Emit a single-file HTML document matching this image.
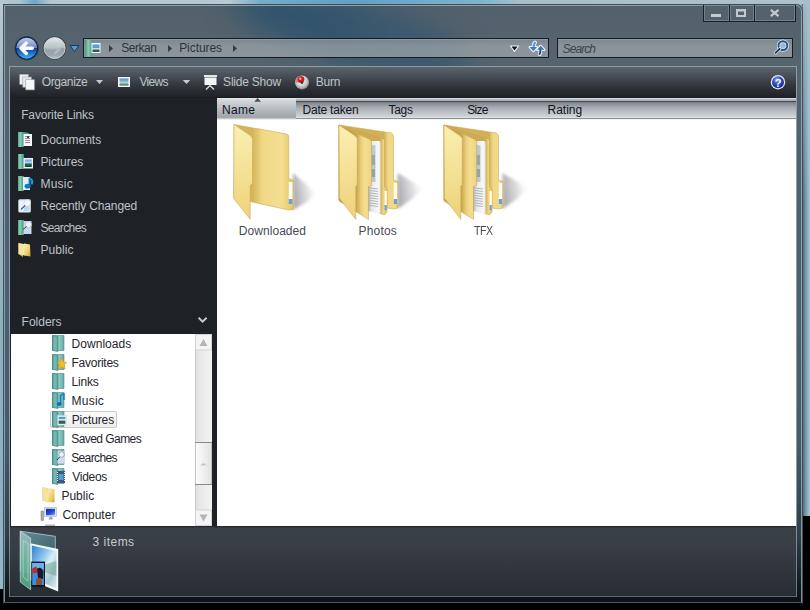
<!DOCTYPE html>
<html><head><meta charset="utf-8">
<style>
*{margin:0;padding:0;box-sizing:border-box}
html,body{width:810px;height:610px;overflow:hidden;background:#000;font-family:"Liberation Sans",sans-serif;font-size:12px}
.a{position:absolute}
#desk{left:0;top:0;width:810px;height:610px;background:#000}
#deskl{left:0;top:0;width:3px;height:589px;background:linear-gradient(180deg,#b9cad3 0,#a9bcc6 80px,#a0b6c0 160px,#90b0c0 320px,#8cb0c2 480px,#94b8c8 589px)}
#deskt{left:0;top:0;width:810px;height:4px;background:linear-gradient(90deg,#b6c8d1 0,#a9c4d3 20px,#6ea5c8 35px,#b3c7d0 50px,#b7c9d2 230px,#78acc9 260px,#62a0c4 350px,#7fb3cd 480px,#a8bec8 520px,#adc2cc 810px)}
#deskro{left:803px;top:0;width:7px;height:200px;background:linear-gradient(180deg,rgba(168,190,202,.9) 0,rgba(168,190,202,.6) 60px,rgba(168,190,202,0) 200px)}

#deskr{left:780px;top:0;width:30px;height:516px;background:linear-gradient(90deg,#9ab4c0 0,#9ab4c0 21px,#4f6d7e 23px,#7a9cb0 26px,#a8ccdc 30px)}
#win{left:3px;top:4px;width:800px;height:600px;background:linear-gradient(180deg,#53616c 0,#56646e 60px,#4f6270 140px,#4a6171 300px,#455b6b 440px,#2e3e4a 530px,#0d1318 590px,#0b1015 600px);border:1px solid #3c505c;border-bottom-color:#000;border-radius:0 7px 0 0}
#win::before{content:"";position:absolute;left:0;top:0;right:0;bottom:0;border:1px solid rgba(165,182,192,.75);border-radius:0 6px 0 0}
#glass{left:5px;top:6px;width:796px;height:60px;overflow:hidden}
.tb{top:4px;height:18px;border:1px solid #1a2126;border-top:0;background:#53626c}
.tb::before{content:"";position:absolute;left:0;top:0;right:0;bottom:0;border:1px solid rgba(150,165,175,.45);border-top:1px solid rgba(150,165,175,.6)}
#inner{left:9px;top:66px;width:788px;height:531px;border:1px solid #8f9ca5;border-bottom-color:#5f6870;background:#1e2126}
#innerl{left:9px;top:500px;width:1px;height:96px;background:linear-gradient(180deg,rgba(95,104,112,0),#6a747c)}
#innerr{left:796px;top:500px;width:1px;height:96px;background:linear-gradient(180deg,rgba(95,104,112,0),#6a747c)}
#outb{left:4px;top:602px;width:798px;height:1px;background:#4d565c}
#addr{left:83px;top:38px;width:466px;height:20px;border:1px solid #161d22;background:linear-gradient(180deg,rgba(140,150,158,.7),rgba(160,168,173,.7) 40%,rgba(162,170,175,.7))}
#addr::before{content:"";position:absolute;left:0;top:0;right:0;bottom:0;border-top:1px solid rgba(160,172,180,.5)}
#search{left:557px;top:38px;width:236px;height:20px;border:1px solid #161d22;background:linear-gradient(180deg,rgba(140,150,158,.7),rgba(160,168,173,.7) 40%,rgba(162,170,175,.7))}
#search::before{content:"";position:absolute;left:0;top:0;right:0;bottom:0;border-top:1px solid rgba(160,172,180,.5)}
#toolbar{left:10px;top:67px;width:786px;height:31px;background:linear-gradient(180deg,#5b636b 0,#4a5159 8px,#353a41 17px,#262a2f 25px,#1f2226 30px,#16191c 31px)}
#lp{left:10px;top:98px;width:207px;height:428px;background:#1e2126}
#content{left:217px;top:98px;width:579px;height:428px;background:#fff}
#hdr{left:217px;top:98px;width:579px;height:22px;background:linear-gradient(180deg,#dcdfe2 0,#dcdfe2 1px,#aeb3b8 1px,#aeb3b8 3px,#40464e 3px,#40464e 4px,#7a8189 4px,#a9b0b6 10px,#d1d5d9 19px,#eceef0 20px,#eceef0 20px,#8b8f94 20px,#8b8f94 21px,#f4f4f4 21px)}
#hdrs{left:217px;top:98px;width:79px;height:22px;background:linear-gradient(180deg,#e1e3e5 0,#e1e3e5 1px,#d5d8db 2px,#c4c8cc 7px,#b3b8bd 12px,#a1a6ac 19px,#a6abb0 20px,#dfe1e3 21px,#f4f4f4 22px)}
#tree{left:11px;top:334px;width:201px;height:192px;background:#fff}
#sb{left:195px;top:334px;width:17px;height:192px;background:linear-gradient(90deg,#c9c9c9 0,#c9c9c9 1px,#e2e2e2 1px,#ececec 50%,#f2f2f2 100%)}
#details{left:10px;top:526px;width:786px;height:70px;background:linear-gradient(180deg,#1e2227 0,#3a4048 2px,#383e46 20px,#30353c 45px,#282d33 70px)}
.lt{color:#bfc3c8;font-size:12px;line-height:14px;white-space:nowrap}
.dt{color:#24242e;font-size:12px;line-height:14px;white-space:nowrap}
</style></head><body>
<div class="a" id="desk"></div>
<div class="a" id="deskl"></div>
<div class="a" id="deskr"></div>
<div class="a" id="deskt"></div>
<div class="a" id="deskro"></div>
<div class="a" id="win"></div>
<svg class="a" id="glass" width="796" height="60"><defs><filter id="bl" x="-50%" y="-50%" width="200%" height="200%"><feGaussianBlur stdDeviation="14"/></filter></defs>
<ellipse cx="345" cy="26" rx="125" ry="34" transform="rotate(16 345 26)" fill="#22506e" opacity=".5" filter="url(#bl)"/>
<ellipse cx="300" cy="14" rx="60" ry="16" transform="rotate(20 300 14)" fill="#1d4a68" opacity=".35" filter="url(#bl)"/>
</svg>
<div class="a" id="addr"></div>
<div class="a" id="search"></div>

<div class="a tb" style="left:703px;width:27px;top:5px;height:17px"></div>
<div class="a tb" style="left:729px;width:26px;top:5px;height:17px"></div>
<div class="a tb" style="left:754px;width:42px;top:5px;height:17px"></div>
<svg class="a" style="left:700px;top:4px" width="100" height="20">
 <rect x="11" y="10" width="10" height="3" fill="#c3cacf"/>
 <rect x="37" y="6" width="8" height="6" fill="none" stroke="#c3cacf" stroke-width="2"/>
 <rect x="36" y="5" width="10" height="2.5" fill="#c3cacf"/>
 <path d="M70.8 5.8 L78.5 12.2 M78.5 5.8 L70.8 12.2" stroke="#c3cacf" stroke-width="2.2"/>
</svg>
<svg class="a" style="left:12px;top:34px" width="70" height="30">
 <defs>
  <linearGradient id="bk1" x1="0" y1="0" x2="0" y2="1"><stop offset="0" stop-color="#c3cde6"/><stop offset=".5" stop-color="#6b86c7"/><stop offset=".5" stop-color="#0b3aa6"/><stop offset="1" stop-color="#3cb5f5"/></linearGradient>
  <linearGradient id="fw1" x1="0" y1="0" x2="0" y2="1"><stop offset="0" stop-color="#e2e7ea"/><stop offset=".45" stop-color="#bcc4c8"/><stop offset=".52" stop-color="#94a0a8"/><stop offset=".8" stop-color="#9aa6ad"/><stop offset="1" stop-color="#b8c2c6"/></linearGradient>
 </defs>
 <circle cx="14.7" cy="14.2" r="12.2" fill="#1c2c55" opacity=".55"/><circle cx="14.7" cy="14.2" r="11.4" fill="#0c1a40" opacity=".85"/>
 <circle cx="14.7" cy="14.2" r="10.5" fill="url(#bk1)"/>
 <path d="M9.5 14.3 H20.2 M14.2 9.2 L9 14.3 L14.2 19.4" fill="none" stroke="#f8faff" stroke-width="3.6" stroke-linecap="round" stroke-linejoin="round"/>
 <circle cx="42.6" cy="14.1" r="11.7" fill="#2a3238" opacity=".8"/>
 <circle cx="42.6" cy="14.1" r="10.6" fill="url(#fw1)" stroke="#d8dee2" stroke-width=".8"/>
 <path d="M34.5 14.2 H47.5 M43.5 9.5 L48.2 14.2 L43.5 18.9" fill="none" stroke="#c4ccd0" stroke-width="2.6" stroke-linecap="round" stroke-linejoin="round" opacity=".55"/>
 <path d="M58 11.5 L67 11.5 L62.5 17.5 Z" fill="#4a9ad8" stroke="#1a3a66" stroke-width="1"/>
</svg>
<svg class="a" style="left:84px;top:39px" width="40" height="19">
 <defs><linearGradient id="ab" x1="0" y1="0" x2="1" y2="0"><stop offset="0" stop-color="#3f9a78"/><stop offset=".4" stop-color="#8ad4b4"/><stop offset="1" stop-color="#4aa084"/></linearGradient></defs>
 <rect x="1.5" y="1" width="6.5" height="16.5" fill="url(#ab)" opacity=".9"/>
 <rect x="7.5" y="4" width="9" height="10" fill="#f4f8fa"/>
 <rect x="8.5" y="5.5" width="7" height="4" fill="#5a9ad0"/>
 <rect x="8.5" y="9.5" width="7" height="1" fill="#d8eef4"/>
 <rect x="8.5" y="10.5" width="7" height="2.5" fill="#2f5a48"/>
 <path d="M25 6 L29 9.5 L25 13 Z" fill="#343c42"/>
</svg>
<svg class="a" style="left:165px;top:39px" width="10" height="19"><path d="M3 6 L7 9.5 L3 13 Z" fill="#343c42"/></svg>
<svg class="a" style="left:230px;top:39px" width="10" height="19"><path d="M3 6 L7 9.5 L3 13 Z" fill="#343c42"/></svg>
<svg class="a" style="left:505px;top:39px" width="45" height="19">
 <path d="M5.5 7 L13.5 7 L9.5 12.5 Z" fill="#0c1230" stroke="#f2f4f8" stroke-width="1.2" stroke-linejoin="round"/>
 <g stroke="#eef4fb" stroke-width="2.2" stroke-linejoin="round" fill="none">
  <path d="M24.6 8 L32 8 L28.4 12.2 Z"/><path d="M32.2 10.8 L39.4 10.8 L35.6 6.8 Z"/>
 </g>
 <path d="M30 3.6 Q28.6 4.8 28.6 8.5" stroke="#eef4fb" stroke-width="4" fill="none" stroke-linecap="round"/>
 <path d="M35.4 10.5 Q35.5 13.8 34.6 15" stroke="#eef4fb" stroke-width="3.8" fill="none" stroke-linecap="round"/>
 <path d="M30 3.6 Q28.6 4.8 28.6 8.5" stroke="#5a9ad8" stroke-width="2.2" fill="none" stroke-linecap="round"/>
 <path d="M24.6 8 L32 8 L28.4 12.2 Z" fill="#3f78c4"/>
 <path d="M35.4 10.5 Q35.5 13.8 34.6 15" stroke="#2a4a78" stroke-width="2" fill="none" stroke-linecap="round"/>
 <path d="M32.2 10.8 L39.4 10.8 L35.6 6.8 Z" fill="#3a70b8"/>
</svg>
<svg class="a" style="left:770px;top:39px" width="22" height="19">
 <circle cx="12.9" cy="6.6" r="4.4" fill="rgba(180,215,240,.55)" stroke="#d8ecfa" stroke-width="3.4"/>
 <circle cx="12.9" cy="6.6" r="4.4" fill="none" stroke="#2c4f86" stroke-width="1.9"/>
 <path d="M9.6 9.8 L5.5 13.8" stroke="#d8ecfa" stroke-width="3.2" stroke-linecap="round"/>
 <path d="M9.6 9.8 L5.5 13.8" stroke="#1e2f4e" stroke-width="1.8" stroke-linecap="round"/>
</svg>
<div class="a" id="inner"></div>
<div class="a" id="innerl"></div>
<div class="a" id="innerr"></div>
<div class="a" id="outb"></div>
<div class="a" id="toolbar"></div>

<svg class="a" style="left:10px;top:67px" width="786" height="30">
 <defs>
  <linearGradient id="vw" x1="0" y1="0" x2="0" y2="1"><stop offset="0" stop-color="#5a8fb5"/><stop offset=".45" stop-color="#8fc0d6"/><stop offset=".6" stop-color="#b8dccf"/><stop offset="1" stop-color="#2d5d4a"/></linearGradient>
  <radialGradient id="cd" cx=".45" cy=".4" r=".6"><stop offset="0" stop-color="#f4f4f4"/><stop offset=".6" stop-color="#cfcfcf"/><stop offset="1" stop-color="#8d8d8d"/></radialGradient>
  <radialGradient id="hp" cx=".4" cy=".3" r=".7"><stop offset="0" stop-color="#8aa6f0"/><stop offset=".5" stop-color="#2f4fc4"/><stop offset="1" stop-color="#1a2c8a"/></radialGradient>
 </defs>
 <g stroke="#9aa0a6" stroke-width=".6">
 <rect x="9.7" y="7.3" width="8.6" height="10.2" fill="#eef0f2"/>
 <rect x="12.8" y="10" width="8.6" height="10.2" fill="#e6e9ec"/>
 <rect x="15.8" y="12.7" width="8.6" height="10.2" fill="#f6f7f8"/>
 </g>
 <path d="M86 13 L93 13 L89.5 17 Z" fill="#c6cacd"/>
 <rect x="108" y="10" width="12" height="10" fill="#f3f6f8"/>
 <rect x="109.5" y="11.5" width="9" height="7" fill="url(#vw)"/>
 <path d="M172.8 13 L180.2 13 L176.5 17 Z" fill="#c6cacd"/>
 <rect x="194" y="8" width="13" height="2" fill="#e6e8ea"/>
 <rect x="194.5" y="10.5" width="12" height="7.5" fill="#f4f5f6"/>
 <path d="M196 22.5 L200 18.5 L204 22.5" fill="none" stroke="#e8eaec" stroke-width="1.1"/>
 <circle cx="292" cy="15.4" r="7" fill="url(#cd)"/>
 <path d="M285.5 15.4 A6.5 6.5 0 0 1 292 8.9 L292 15.4 Z" fill="#d23a3a" opacity=".55"/>
 <circle cx="291" cy="12.6" r="3.3" fill="#d01818"/>
 <circle cx="290.3" cy="11.8" r="1.2" fill="#f7b0b0"/>
 <circle cx="292" cy="15.6" r="1.3" fill="#333"/>
 <circle cx="768" cy="15.2" r="7.2" fill="#e4e8f4"/>
 <circle cx="768" cy="15.2" r="6" fill="url(#hp)"/>
 <text x="768" y="19.6" font-family="Liberation Sans" font-weight="bold" font-size="11" fill="#fff" text-anchor="middle">?</text>
</svg>
<div class="a" id="lp"></div>
<div class="a" id="content"></div>

<svg class="a" style="left:217px;top:120px" width="400" height="110">
 <defs>
  <linearGradient id="fl" x1="0" y1="0" x2="0" y2="1"><stop offset="0" stop-color="#fbefb2"/><stop offset=".5" stop-color="#f5e196"/><stop offset="1" stop-color="#edd27a"/></linearGradient>
  <linearGradient id="fb" x1="0" y1="0" x2="1" y2="0"><stop offset="0" stop-color="#d6b65a"/><stop offset=".31" stop-color="#d4b458"/><stop offset=".48" stop-color="#f0d886"/><stop offset=".8" stop-color="#f4de90"/><stop offset="1" stop-color="#e4c66a"/></linearGradient>
  <linearGradient id="fb2" x1="0" y1="0" x2="1" y2="0"><stop offset="0" stop-color="#c9a54c"/><stop offset=".35" stop-color="#f1d98f"/><stop offset="1" stop-color="#ead07f"/></linearGradient>
  <linearGradient id="pp" x1="0" y1="0" x2="1" y2="0"><stop offset="0" stop-color="#9a9ea4"/><stop offset=".25" stop-color="#e4e6e8"/><stop offset=".8" stop-color="#f8f8f8"/><stop offset="1" stop-color="#e8e8e8"/></linearGradient>
  <filter id="shb" x="-50%" y="-50%" width="200%" height="200%"><feGaussianBlur stdDeviation="1.8"/></filter><linearGradient id="sh" x1="0" y1="0.3" x2="1" y2="0.1"><stop offset="0" stop-color="#a8a8ae" stop-opacity=".95"/><stop offset=".5" stop-color="#cfcfd4" stop-opacity=".7"/><stop offset="1" stop-color="#ffffff" stop-opacity="0"/></linearGradient>
  <g id="photos">
   <path d="M58.5 48 L85 64 L75 71.5 L73.5 73.5 L58.5 84 Z" fill="url(#sh)" filter="url(#shb)"/>
   <path d="M0 0 L52.5 8 L54.5 10.5 L54.5 55 L59 56.5 L59 83 L54.5 84 L0 75 Z" fill="url(#pb4)" stroke="#c8a656" stroke-width=".55"/>
   <rect x="54.8" y="58" width="3.4" height="20" fill="#fffef4"/>
   <rect x="54.8" y="74" width="3.4" height="5" fill="#6a9fd8"/>
   <path d="M0 0 L44 13.5 L45.5 15.5 L45.5 62 L48 63.5 L48 87 L45.5 90 L0 75 Z" fill="url(#pb3)" stroke="#c8a656" stroke-width=".55"/>
   <rect x="45.6" y="66" width="2.2" height="18" fill="#fffef4"/>
   <rect x="45.6" y="80" width="2.2" height="5" fill="#6a9fd8"/>
   <path d="M29 16 L40.5 16 L41.5 17.5 L41.5 89 L29 86 Z" fill="url(#pp)"/>
   <path d="M32 20 L36.5 20.5 L36.5 57 L32 57 Z" fill="#8a9ca8" opacity=".45"/>
   <path d="M32.5 30 L36 30 L36 40 L32.5 40 Z" fill="#6a8a98" opacity=".5"/>
   <path d="M32.5 44 L36 44 L36 52 L32.5 52 Z" fill="#5a7a70" opacity=".45"/>
   <path d="M31 63 L39 64 M31 65.5 L39 66.5 M31 68 L39 69 M31 70.5 L39 71.5 M31 73 L39 74 M31 75.5 L39 76.5 M31 78 L39 79 M31 80.5 L39 81.5" stroke="#9a9ea4" stroke-width=".7"/>
   <path d="M0 0 L31 14.5 L32.5 16.5 L32.5 60.5 L29.5 61.5 L29.5 94.5 L0 76 Z" fill="url(#pb2)" stroke="#c8a656" stroke-width=".55"/>
   <path d="M0 0 L16.5 11 L18.2 13.5 L18.2 60 L16.8 61 L16.8 94.5 L0.4 73 Z" fill="url(#pb1)" stroke="#c8a656" stroke-width=".55"/>
  </g>
  <linearGradient id="pb1" gradientUnits="userSpaceOnUse" x1="0" y1="0" x2="18" y2="90"><stop offset="0" stop-color="#fbefb2"/><stop offset=".5" stop-color="#f5e196"/><stop offset="1" stop-color="#edd27a"/></linearGradient>
  <linearGradient id="pb2" gradientUnits="userSpaceOnUse" x1="17" y1="0" x2="32" y2="0"><stop offset="0" stop-color="#c8a248"/><stop offset=".35" stop-color="#ebd07c"/><stop offset=".6" stop-color="#f4df90"/><stop offset="1" stop-color="#efd582"/></linearGradient>
  <linearGradient id="pb3" gradientUnits="userSpaceOnUse" x1="41" y1="0" x2="48" y2="0"><stop offset="0" stop-color="#cdab52"/><stop offset=".5" stop-color="#eed482"/><stop offset="1" stop-color="#e4c66c"/></linearGradient>
  <linearGradient id="pb4" gradientUnits="userSpaceOnUse" x1="45" y1="0" x2="59" y2="0"><stop offset="0" stop-color="#d2b056"/><stop offset=".3" stop-color="#f0d886"/><stop offset=".8" stop-color="#f1d98a"/><stop offset="1" stop-color="#e0c266"/></linearGradient>
 </defs>
 <path d="M76 53 L100 74 L93 79 L91.5 81 L76 90 Z" fill="url(#sh)" filter="url(#shb)"/>
 <path d="M17 4.5 L70 14 L71.8 16 L71.8 58.5 L76.3 60 L76.3 89.5 L71.8 90 L17 78 Z" fill="url(#fb)" stroke="#c8a656" stroke-width=".55"/>
 <rect x="71.8" y="62" width="3.6" height="17" fill="#fffef6"/>
 <rect x="71.8" y="79" width="3.6" height="5" fill="#6a9fd8"/>
 <path d="M17 4.5 L34 16 L35.5 18.5 L35.5 63.5 L33.2 65.5 L33.2 99.2 L16.6 78.5 Z" fill="url(#fl)" stroke="#c8a656" stroke-width=".55"/>
 <use href="#photos" x="122" y="5"/>
 <use href="#photos" x="227" y="5"/>
</svg>
<div class="a" id="hdr"></div>
<div class="a" id="hdrs"></div>

<svg class="a" style="left:10px;top:98px" width="207" height="428">
 <defs>
  <linearGradient id="gb" x1="0" y1="0" x2="1" y2="0"><stop offset="0" stop-color="#4e9e86"/><stop offset=".35" stop-color="#8fd0b8"/><stop offset=".6" stop-color="#6bb89e"/><stop offset="1" stop-color="#3f8a74"/></linearGradient>
  <linearGradient id="gy" x1="0" y1="0" x2="1" y2="1"><stop offset="0" stop-color="#fbf1bf"/><stop offset=".6" stop-color="#ecd06e"/><stop offset="1" stop-color="#c9a032"/></linearGradient>
  <linearGradient id="sky" x1="0" y1="0" x2="0" y2="1"><stop offset="0" stop-color="#5aa0e0"/><stop offset=".5" stop-color="#bfe2f4"/><stop offset=".55" stop-color="#2f6a58"/><stop offset="1" stop-color="#1c3c30"/></linearGradient>
 </defs>
 <!-- Documents y=132 -->
 <rect x="8" y="34" width="6" height="15" fill="url(#gb)"/>
 <path d="M14 34 L19 35 L19 37 L14 37 Z" fill="#4f9a86"/>
 <rect x="13.5" y="36" width="8.5" height="12" fill="#f6f8fa"/>
 <rect x="15" y="38" width="5" height="1" fill="#7a8aa8"/>
 <rect x="15" y="40" width="5" height="1" fill="#c07888"/>
 <rect x="15" y="42" width="5" height="1" fill="#8a98b0"/>
 <rect x="15" y="44" width="5" height="1" fill="#c07888"/>
 <rect x="17" y="38" width="2" height="2" fill="#3a4a70"/>
 <!-- Pictures y=154 -->
 <rect x="8" y="56" width="6" height="15" fill="url(#gb)"/>
 <rect x="13.5" y="60" width="9.5" height="10.5" fill="#f2f6f8"/>
 <rect x="14.8" y="61.5" width="7" height="7.5" fill="url(#sky)"/>
 <!-- Music y=176 -->
 <rect x="8" y="78" width="6" height="15" fill="url(#gb)"/>
 <rect x="13" y="79" width="7" height="13" fill="#e4eef2"/>
 <path d="M19.5 80.5 Q23 81.5 22 85.5" stroke="#1a98c8" stroke-width="2.2" fill="none" stroke-linecap="round"/>
 <path d="M19.5 80.5 V88" stroke="#0a78c0" stroke-width="1.8"/>
 <ellipse cx="17.6" cy="88.2" rx="3" ry="2.4" fill="#0a7ac8"/>
 <!-- Recently changed y=199 -->
 <rect x="8.3" y="101.3" width="12.5" height="13.2" rx="1.5" fill="#dfe6f8"/>
 <rect x="9.5" y="103" width="9" height="10" fill="#eef2fc"/>
 <rect x="14" y="107" width="5" height="6" fill="#b8d8f4"/>
 <circle cx="17.2" cy="105" r="3.3" fill="#f6f8fc" stroke="#c8d4ea" stroke-width=".8"/>
 <path d="M11 111.5 L15 107.5" stroke="#405878" stroke-width="1.1"/>
 <!-- Searches y=221 -->
 <rect x="8" y="122" width="6" height="15" fill="url(#gb)"/>
 <rect x="13.5" y="123" width="8" height="13" fill="#c8d8f0"/>
 <circle cx="18.5" cy="126.5" r="3" fill="#eef2fa" stroke="#a8b8d8" stroke-width=".6"/>
 <path d="M13 131.5 L16.5 128.5" stroke="#2a3a52" stroke-width="1"/>
 <!-- Public y=243 -->
 <path d="M8.5 145 L14 146 L14.5 157.5 L8.5 156 Z" fill="#f6e9a8"/>
 <path d="M14 145.5 L20 146.5 L20.5 158.5 L14 157.5 Z" fill="url(#gy)"/>
 <path d="M8.5 145 L13 147 L13 159 L8.5 156 Z" fill="#f3e39a" opacity=".8"/>
 <!-- Folders chevron -->
 <path d="M188.6 219.8 L192.6 223.6 L196.6 219.8" fill="none" stroke="#c8ccd0" stroke-width="2"/>
</svg>
<div class="a" id="tree"></div>
<div class="a" id="sb"></div>

<div class="a" style="left:50px;top:411px;width:67px;height:17px;border:1px solid #c9c9c9;border-radius:2px;background:linear-gradient(180deg,#fafafa,#eeeeee)"></div>
<svg class="a" style="left:11px;top:334px" width="201" height="192">
 <defs>
  <linearGradient id="tf" x1="0" y1="0" x2="1" y2="0"><stop offset="0" stop-color="#4f9a95"/><stop offset=".4" stop-color="#79bdb5"/><stop offset="1" stop-color="#5aa59d"/></linearGradient>
  <linearGradient id="tb2" x1="0" y1="0" x2="1" y2="0"><stop offset="0" stop-color="#5a9fa8"/><stop offset=".5" stop-color="#9ccfc8"/><stop offset="1" stop-color="#62a8a8"/></linearGradient>
  <linearGradient id="gy2" x1="0" y1="0" x2="1" y2="1"><stop offset="0" stop-color="#fbf1bf"/><stop offset=".6" stop-color="#ecd06e"/><stop offset="1" stop-color="#c9a032"/></linearGradient>
  <linearGradient id="scr" x1="0" y1="0" x2="1" y2="1"><stop offset="0" stop-color="#0a24b0"/><stop offset=".6" stop-color="#2a50d8"/><stop offset="1" stop-color="#8fb0f0"/></linearGradient>
  <g id="tfold">
   <path d="M0 0 H11.5 V15 H0 Z" fill="url(#tb2)" stroke="#4a8a8a" stroke-width=".6"/>
   <path d="M0 0 L5.5 1 V16 L0 15 Z" fill="url(#tf)" stroke="#3f7f7f" stroke-width=".6"/>
  </g>
 </defs>
 <use href="#tfold" x="41.5" y="1.5"/>
 <use href="#tfold" x="41.5" y="20.5"/>
 <path d="M50.8 23.5 L52.6 28 L55.5 28.4 L53.2 31 L54.2 35 L50.8 33 L47.4 35 L48.4 31 L46 28.4 L49 28 Z" fill="#f4c020" stroke="#d08a10" stroke-width=".5"/>
 <use href="#tfold" x="41.5" y="39.5"/>
 <use href="#tfold" x="41.5" y="58.5"/>
 <path d="M49.5 61 L53 60 L53 66 M49.5 61 L49.5 70" stroke="#1a80c8" stroke-width="1.5" fill="none"/>
 <ellipse cx="48.3" cy="70" rx="2.4" ry="1.9" fill="#0a70c0"/>
 <use href="#tfold" x="41.5" y="77.5"/>
 <rect x="46.5" y="81.5" width="9" height="9.5" fill="#f4f8fa" stroke="#c8d0d4" stroke-width=".5"/>
 <rect x="47.6" y="82.8" width="6.8" height="2.6" fill="#5a98d0"/>
 <rect x="47.6" y="85.4" width="6.8" height="1.2" fill="#e0f4f4"/>
 <rect x="47.6" y="86.6" width="6.8" height="3.2" fill="#2f5f50"/>
 <use href="#tfold" x="41.5" y="96.5"/>
 <use href="#tfold" x="41.5" y="115.5"/>
 <rect x="46.5" y="117" width="7" height="12.5" fill="#cfdcf0"/>
 <circle cx="50.5" cy="120.5" r="2.8" fill="#eef2fa" stroke="#7a8aa8" stroke-width=".7"/>
 <path d="M46 126 L48.5 123" stroke="#2a3a52" stroke-width="1"/>
 <use href="#tfold" x="41.5" y="134.5"/>
 <rect x="46" y="137" width="8" height="12" fill="#3a5a7a"/>
 <path d="M46.5 138 V148 M53.5 138 V148" stroke="#e0e8f0" stroke-width="1" stroke-dasharray="1 1"/>
 <rect x="47.5" y="140" width="5" height="6" fill="#5a9ac8"/>
 <!-- Public -->
 <path d="M31.5 153.5 L37 154.5 L37.5 168 L31.5 166.5 Z" fill="#f6e9a8" stroke="#d8c070" stroke-width=".5"/>
 <path d="M37 154 L43.5 155 L43.5 168.5 L37 168 Z" fill="url(#gy2)"/>
 <path d="M31.5 153.5 L36 155.5 L36 168.5 L31.5 166.5 Z" fill="#f3e39a" opacity=".9"/>
 <!-- Computer -->
 <rect x="33.5" y="173.5" width="12" height="9" fill="#dfe6f0" stroke="#a8b4c4" stroke-width=".6"/>
 <rect x="35" y="174.8" width="9" height="6.5" fill="url(#scr)"/>
 <path d="M37.5 185.5 H42 L41 183 H38.5 Z" fill="#9aa4b0"/>
 <rect x="30" y="177" width="2.5" height="9.5" fill="#a0a8b0" stroke="#707880" stroke-width=".5"/>
 <!-- partial next -->
 <rect x="34" y="190.5" width="10" height="2" fill="#b0b6bc"/>
 <!-- scrollbar parts -->
 <rect x="184.5" y="0.5" width="16" height="15.5" fill="#f4f4f4" stroke="#d4d4d4" stroke-width="1"/>
 <path d="M188.5 12 L192.5 5 L196.5 12 Z" fill="#b4b4b4"/>
 <rect x="184.5" y="108.5" width="16" height="42" fill="url(#thumb)" stroke="#c4c4c4" stroke-width="1"/>
 <path d="M184 108.5 H201 M184 150.5 H201" stroke="#8a8a8a" stroke-width="1"/>
 <path d="M189.5 131.5 Q192.5 127 195.5 131.5 Z" fill="#c4c4c4"/>
 <rect x="184.5" y="176" width="16" height="15.5" fill="#f4f4f4" stroke="#d4d4d4" stroke-width="1"/>
 <path d="M188.5 180.5 L192.5 187.5 L196.5 180.5 Z" fill="#b4b4b4"/>
 <defs><linearGradient id="thumb" x1="0" y1="0" x2="1" y2="0"><stop offset="0" stop-color="#fbfbfb"/><stop offset=".5" stop-color="#f0f0f0"/><stop offset="1" stop-color="#e2e2e2"/></linearGradient></defs>
</svg>
<div class="a" id="details"></div>

<!-- text -->
<div class="a lt" style="left:121.2px;top:41px;color:#2b343a;letter-spacing:-0.48px">Serkan</div>
<div class="a lt" style="left:179.2px;top:41px;color:#2b343a;letter-spacing:-0.07px">Pictures</div>
<div class="a lt" style="left:562.6px;top:42px;color:#38434a;font-style:italic;letter-spacing:-0.94px">Search</div>

<div class="a lt" style="left:41.8px;top:75px;letter-spacing:-0.40px">Organize</div>
<div class="a lt" style="left:139.4px;top:75px;letter-spacing:-0.70px">Views</div>
<div class="a lt" style="left:223.1px;top:75px;letter-spacing:-0.22px">Slide Show</div>
<div class="a lt" style="left:315.8px;top:75px;letter-spacing:-0.20px">Burn</div>

<div class="a lt" style="left:21.2px;top:108px;letter-spacing:-0.15px">Favorite Links</div>
<div class="a lt" style="left:40.5px;top:133px;letter-spacing:0.00px">Documents</div>
<div class="a lt" style="left:40.4px;top:155px;letter-spacing:-0.07px">Pictures</div>
<div class="a lt" style="left:40.4px;top:177px;letter-spacing:0.25px">Music</div>
<div class="a lt" style="left:40.4px;top:199px;letter-spacing:-0.13px">Recently Changed</div>
<div class="a lt" style="left:40.4px;top:221px;letter-spacing:-0.63px">Searches</div>
<div class="a lt" style="left:40.4px;top:243px;letter-spacing:0.08px">Public</div>
<div class="a lt" style="left:21.6px;top:315px;letter-spacing:0.00px">Folders</div>

<div class="a dt" style="left:71.5px;top:337px;letter-spacing:0.05px">Downloads</div>
<div class="a dt" style="left:71.5px;top:356px;letter-spacing:-0.25px">Favorites</div>
<div class="a dt" style="left:71.5px;top:375px;letter-spacing:-0.17px">Links</div>
<div class="a dt" style="left:71.5px;top:394px;letter-spacing:0.25px">Music</div>
<div class="a dt" style="left:71.7px;top:413px;letter-spacing:-0.13px">Pictures</div>
<div class="a dt" style="left:71.2px;top:432px;letter-spacing:-0.55px">Saved Games</div>
<div class="a dt" style="left:71.2px;top:451px;letter-spacing:-0.63px">Searches</div>
<div class="a dt" style="left:72.3px;top:470px;letter-spacing:-0.28px">Videos</div>
<div class="a dt" style="left:61.4px;top:489px;letter-spacing:0.02px">Public</div>
<div class="a dt" style="left:62.4px;top:508px;letter-spacing:0.06px">Computer</div>

<svg class="a" style="left:252px;top:97px" width="12" height="6"><path d="M2.2 4.8 L5.6 1 L9 4.8 Z" fill="#4a5056"/></svg>
<div class="a dt" style="left:222.0px;top:103px;color:#12121c;letter-spacing:0.33px">Name</div>
<div class="a dt" style="left:302.5px;top:103px;color:#12121c;letter-spacing:-0.22px">Date taken</div>
<div class="a dt" style="left:388.6px;top:103px;color:#12121c;letter-spacing:-0.33px">Tags</div>
<div class="a dt" style="left:467.3px;top:103px;color:#12121c;letter-spacing:-0.77px">Size</div>
<div class="a dt" style="left:547.5px;top:103px;color:#12121c;letter-spacing:0.00px">Rating</div>

<div class="a dt" style="left:238.7px;top:224px;color:#474c57;letter-spacing:0.07px">Downloaded</div>
<div class="a dt" style="left:358.5px;top:224px;color:#474c57;letter-spacing:0.18px">Photos</div>
<div class="a dt" style="left:474.0px;top:224px;color:#474c57;letter-spacing:-0.5px;transform:scaleX(.88);transform-origin:0 0">TFX</div>


<svg class="a" style="left:14px;top:526px" width="50" height="70">
 <defs>
  <linearGradient id="dg1" x1="0" y1="0" x2="0" y2="1"><stop offset="0" stop-color="#a2bcc4"/><stop offset=".45" stop-color="#78b8a4"/><stop offset="1" stop-color="#4caa84"/></linearGradient>
  <linearGradient id="dg2" x1="0" y1="0" x2="1" y2="1"><stop offset="0" stop-color="#6a9aa4" stop-opacity=".85"/><stop offset="1" stop-color="#3a6068" stop-opacity=".8"/></linearGradient>
  <linearGradient id="dsky" x1="0" y1="0" x2="1" y2="1"><stop offset="0" stop-color="#2f7ed0"/><stop offset=".35" stop-color="#8cc4ec"/><stop offset=".55" stop-color="#d8eef8"/><stop offset=".75" stop-color="#a8c8d0"/><stop offset="1" stop-color="#e4eef2"/></linearGradient>
 </defs>
 <path d="M6.3 5.2 L41.3 10.3 L41.3 50 L6.3 45 Z" fill="url(#dg2)" stroke="#b0d0d4" stroke-width=".8"/>
 <path d="M16 17.2 L44.2 23 L44.2 65.4 L16 54 Z" fill="#f4f8fa"/>
 <path d="M17.8 19.6 L42.4 25 L42.4 62.6 L17.8 52 Z" fill="url(#dsky)"/>
 <path d="M26 40 L42.4 35 L42.4 50 L30 46 Z" fill="#70a890" opacity=".55"/>
 <rect x="17.2" y="35.6" width="13.8" height="25.2" fill="#0e1620"/>
 <rect x="18.2" y="37" width="11.8" height="22" fill="#3a90e0"/>
 <rect x="18.2" y="37" width="11.8" height="6" fill="#6ab0f0"/>
 <path d="M18.5 42 L22.5 40.5 L23.5 46.5 L18.5 47.5 Z" fill="#c82828"/>
 <path d="M23 42.5 Q27.5 40 29.5 46 L29 53 L24 52 Z" fill="#1a1a28"/>
 <path d="M22 53 Q25 50 28 54 L28 59 L22 59 Z" fill="#8a5030"/>
 <path d="M6.3 5.2 L16.6 12 L16.6 63.7 L6.3 56 Z" fill="url(#dg1)" stroke="#c4e4dc" stroke-width=".8" opacity=".9"/>
 <path d="M9.2 14.5 L14 17.5 L14 55 L9.2 51 Z" fill="none" stroke="#c8ecdc" stroke-width=".9" opacity=".6"/>
</svg>
<div class="a lt" style="left:92.6px;top:535px;color:#c6cacf;letter-spacing:0.47px">3 items</div>
</body></html>
